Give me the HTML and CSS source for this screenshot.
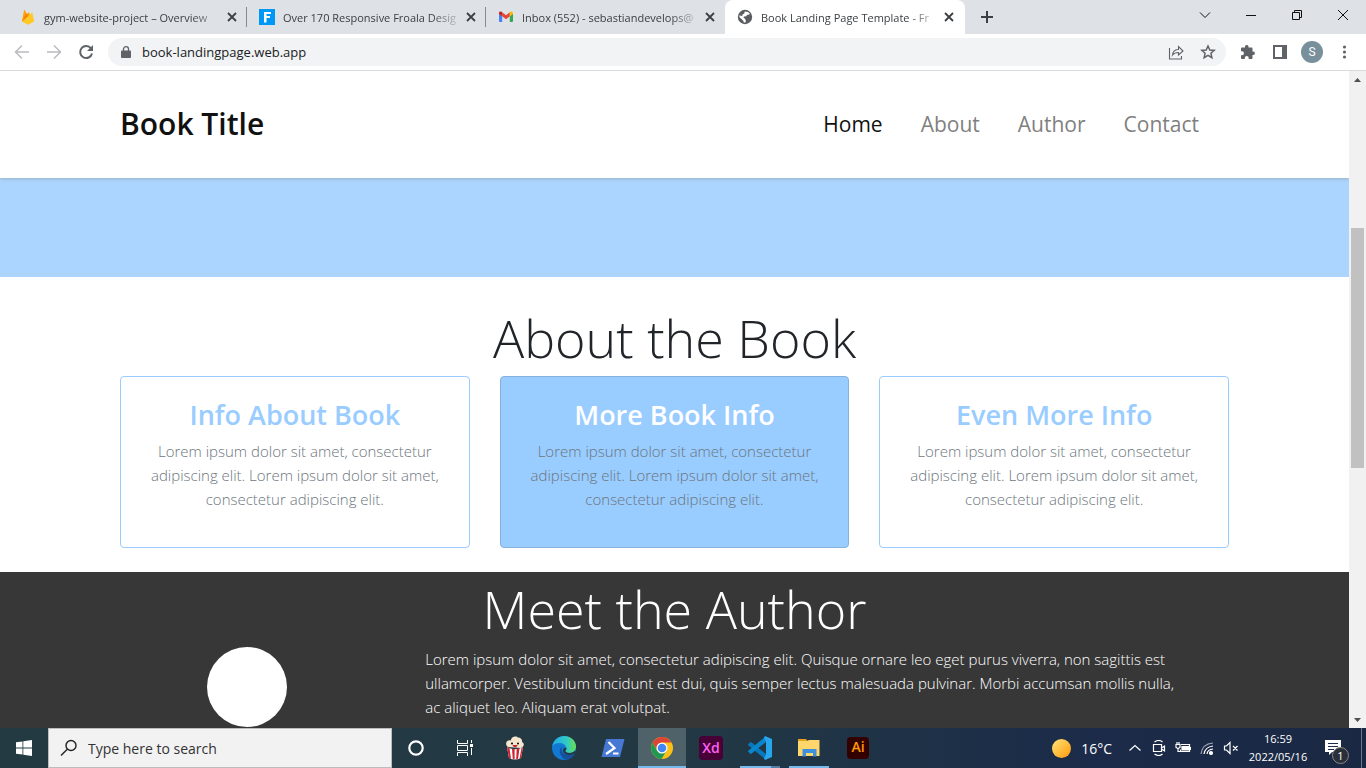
FILE: index.html
```html
<!DOCTYPE html>
<html lang="en">
<head>
<meta charset="utf-8">
<title>Book Landing Page Template</title>
<link rel="stylesheet" href="styles.css">
</head>
<body>
<div class="tabstrip">
  <div class="tab">
    <svg class="favicon" viewBox="0 0 16 16"><path fill="#ffa000" d="M2 12.500 4 1.500c.1-.5.700-.5.900-.1L7 5.200l.900-1.600c.2-.4.6-.4.8 0L14 12.500z"/><path fill="#f57c00" d="M8.800 8.300 6.600 4.400 2 12.500z"/><path fill="#ffca28" d="m14 12.500-1.500-8.400c-.1-.4-.5-.5-.8-.2L2 12.500l5.300 3a1.500 1.500 0 0 0 1.500 0z"/></svg>
    <button class="tab-title">gym-website-project – Overview</button>
    <button class="tab-close" aria-label="Close tab"><svg viewBox="0 0 10 10"><path d="m1 1 8 8M9 1 1 9"/></svg></button>
  </div>
  <div class="tab">
    <svg class="favicon" viewBox="0 0 16 16"><path fill="#0098f7" d="M0 0h16v16H0z"/><path fill="#fff" d="M5 3h7v2H7.500v2H11v2H7.500v4.500H5z"/></svg>
    <button class="tab-title">Over 170 Responsive Froala Desig</button>
    <button class="tab-close" aria-label="Close tab"><svg viewBox="0 0 10 10"><path d="m1 1 8 8M9 1 1 9"/></svg></button>
  </div>
  <div class="tab">
    <svg class="favicon" viewBox="0 0 16 16"><path fill="#4285f4" d="M1 4.500 4.200 7v6H2a1 1 0 0 1-1-1z"/><path fill="#34a853" d="M11.800 7 15 4.500V12a1 1 0 0 1-1 1h-2.200z"/><path fill="#ea4335" d="M4.200 3.300 8 6.200l3.800-2.900v4L8 10.200 4.200 7.300z"/><path fill="#c5221f" d="M1 4.200c0-1.700 1.600-2.300 2.700-1.300l.5.400v4L1 5z"/><path fill="#fbbc04" d="M15 4.200c0-1.700-1.600-2.300-2.700-1.300l-.5.400v4L15 5z"/></svg>
    <button class="tab-title">Inbox (552) - sebastiandevelops@</button>
    <button class="tab-close" aria-label="Close tab"><svg viewBox="0 0 10 10"><path d="m1 1 8 8M9 1 1 9"/></svg></button>
  </div>
  <div class="tab active">
    <svg class="favicon" viewBox="0 0 16 16"><circle cx="8" cy="8" r="7.200" fill="#5a5e63"/><path fill="#fff" d="M7.800 2.500 11 3l1.700 1.500-.6 1.200-2 .1-.8 1.500-2.200.2-.7 1L8 9.700l.9 2-.5 1.900-1.500-.1-.8-2-1.900-1.700L2.300 8l.3-1.700 2.600 1 .4-2 1.500-.6z"/></svg>
    <button class="tab-title">Book Landing Page Template - Fr</button>
    <button class="tab-close" aria-label="Close tab"><svg viewBox="0 0 10 10"><path d="m1 1 8 8M9 1 1 9"/></svg></button>
  </div>
  <button class="new-tab" aria-label="New tab"><svg viewBox="0 0 12 12"><path d="M6 0v12M0 6h12"/></svg></button>
  <div class="window-controls">
    <button aria-label="Search tabs"><svg viewBox="0 0 12 12"><path d="m1 3.500 5 5 5-5"/></svg></button>
    <button aria-label="Minimize"><svg viewBox="0 0 12 12"><path d="M1 6.500h10"/></svg></button>
    <button aria-label="Restore"><svg viewBox="0 0 12 12"><path d="M1.500 3.500h7v7h-7zM3.500 3.500v-2h7v7h-2"/></svg></button>
    <button aria-label="Close"><svg viewBox="0 0 12 12"><path d="m1 1 10 10M11 1 1 11"/></svg></button>
  </div>
</div>

<div class="toolbar">
  <button class="tool dim" aria-label="Back"><svg viewBox="0 0 16 16"><path d="M15 8H2M8 1.500 1.500 8 8 14.500"/></svg></button>
  <button class="tool dim" aria-label="Forward"><svg viewBox="0 0 16 16"><path d="M1 8h13M8 1.500 14.500 8 8 14.500"/></svg></button>
  <button class="tool reload" aria-label="Reload"><svg viewBox="0 0 16 16"><path d="M13 4.500A6 6 0 1 0 14 9.500"/><path class="solid" d="M15 1v6H9z"/></svg></button>
  <div class="omnibox">
    <svg class="lock" viewBox="0 0 10 12"><path fill="#5f6368" d="M1 4.500h8c.5 0 1 .5 1 1V11c0 .5-.5 1-1 1H1c-.5 0-1-.5-1-1V5.500c0-.5.5-1 1-1z"/><path fill="none" stroke="#5f6368" stroke-width="1.300" d="M2.500 5V3a2.500 2.300 0 0 1 5 0v2"/></svg>
    <input class="url" type="text" aria-label="Address" value="book-landingpage.web.app">
    <button class="tool share" aria-label="Share"><svg viewBox="0 0 16 16"><path d="M1.500 4v11h12v-3M4.500 11c.5-4 3-5.500 6-5.500v-3L15 7l-4.500 4V8.500c-2.500 0-4.500.5-6 2.500z"/></svg></button>
    <button class="tool star" aria-label="Bookmark"><svg viewBox="0 0 16 16"><path d="m8 2 1.800 4 4.400.4-3.300 2.900 1 4.300L8 11.300l-3.900 2.300 1-4.300-3.300-2.900L6.200 6z"/></svg></button>
  </div>
  <button class="tool ext" aria-label="Extensions"><svg viewBox="0 0 16 16"><path class="solid" d="M13.500 7.500h-1V4.700c0-.7-.5-1.200-1.200-1.200H8.500v-1a1.800 1.800 0 0 0-3.500 0v1H2.200C1.500 3.500 1 4 1 4.700v2.600h1a1.900 1.900 0 0 1 0 3.900H1v2.700c0 .6.500 1.100 1.200 1.100h2.600v-1a1.900 1.900 0 0 1 3.900 0v1h2.600c.7 0 1.200-.5 1.200-1.100V11h1a1.800 1.800 0 0 0 0-3.500z"/></svg></button>
  <button class="tool side" aria-label="Side panel"><svg viewBox="0 0 16 16"><path class="solid" fill-rule="evenodd" d="M1 1h14v14H1zm2 2v10h7V3z"/></svg></button>
  <button class="avatar" aria-label="Profile">S</button>
  <button class="tool dots" aria-label="Menu"><svg viewBox="0 0 16 16"><circle class="solid" cx="8.500" cy="3" r="1.600"/><circle class="solid" cx="8.500" cy="8" r="1.600"/><circle class="solid" cx="8.500" cy="13" r="1.600"/></svg></button>
</div>

<div class="viewport">
  <div class="page">
    <header class="site-header">
      <a class="brand" href="#">Book Title</a>
      <nav class="site-nav">
        <a class="current" href="#">Home</a>
        <a href="#about">About</a>
        <a href="#author">Author</a>
        <a href="#contact">Contact</a>
      </nav>
    </header>
    <div class="hero"></div>
    <section class="about" id="about">
      <h1 class="display">About the Book</h1>
      <div class="cards">
        <article class="card">
          <h2>Info About Book</h2>
          <p>Lorem ipsum dolor sit amet, consectetur<br>adipiscing elit. Lorem ipsum dolor sit amet,<br>consectetur adipiscing elit.</p>
        </article>
        <article class="card filled">
          <h2>More Book Info</h2>
          <p>Lorem ipsum dolor sit amet, consectetur<br>adipiscing elit. Lorem ipsum dolor sit amet,<br>consectetur adipiscing elit.</p>
        </article>
        <article class="card">
          <h2>Even More Info</h2>
          <p>Lorem ipsum dolor sit amet, consectetur<br>adipiscing elit. Lorem ipsum dolor sit amet,<br>consectetur adipiscing elit.</p>
        </article>
      </div>
    </section>
    <section class="author" id="author">
      <h1 class="display">Meet the Author</h1>
      <div class="author-row">
        <div class="portrait-col"><div class="portrait"></div></div>
        <p class="bio">Lorem ipsum dolor sit amet, consectetur adipiscing elit. Quisque ornare leo eget purus viverra, non sagittis est<br>ullamcorper. Vestibulum tincidunt est dui, quis semper lectus malesuada pulvinar. Morbi accumsan mollis nulla,<br>ac aliquet leo. Aliquam erat volutpat.</p>
      </div>
    </section>
  </div>
  <div class="scrollbar">
    <svg class="arrow" viewBox="0 0 17 17"><path d="M5 11h7L8.500 7z"/></svg>
    <div class="track"><div class="thumb"></div></div>
    <svg class="arrow" viewBox="0 0 17 17"><path d="M5 7h7l-3.500 4z"/></svg>
  </div>
</div>

<div class="taskbar">
  <button class="start" aria-label="Start"><svg viewBox="0 0 16 16"><path fill="#fff" d="M0 2.300 6.500 1.400v6.200H0zM7.300 1.200 16 0v7.600H7.300zM0 8.400h6.500v6.200L0 13.700zM7.300 8.400H16V16l-8.700-1.200z"/></svg></button>
  <label class="search">
    <svg viewBox="0 0 18 18"><circle cx="11" cy="6.500" r="5"/><path d="M7.300 10.200 1 16.500"/></svg>
    <input type="text" aria-label="Type here to search" placeholder="Type here to search">
  </label>
  <div class="apps">
    <button class="app" aria-label="Cortana"><svg viewBox="0 0 24 24"><circle cx="12" cy="12" r="6.700" fill="none" stroke="#fff" stroke-width="2.200"/></svg></button>
    <button class="app task-view" aria-label="Task View"><svg viewBox="0 0 24 24"><path fill="none" stroke="#fff" d="M3.500 4v3.500h10V4M3.500 20v-3.500h10V20M3.500 9.500h10v5h-10zM17.500 4v3M17.500 12v7"/><path fill="#fff" d="M16 8h3v3h-3z"/></svg></button>
    <button class="app" aria-label="Popcorn Time"><svg viewBox="0 0 24 24"><path fill="#f5e6cf" d="M5 11C1 8 4 3 8 4.500 8 0 14-.5 15 1.500c3 0 4.500 2.500 4 4.500 3 1.500 2 5-1 6z"/><path fill="#fff" d="m4 11 2 11c4 2 8 2 12 0l2-11c-5 3-11 3-16 0z"/><path fill="#cf2330" d="m4 11 2 11 2 1-1.500-11zM9 13l.8 10.300h1.800V13zM13.700 13l-.5 10.300H15L16.500 12zM18.500 12l-2 10.700L18 22l2-11z"/><circle cx="9" cy="7.500" r="1"/><circle cx="15" cy="7.500" r="1"/><path fill="#c5222b" d="M9.500 9h5c-.5 3-4 3-5 0z"/></svg></button>
    <button class="app" aria-label="Edge"><svg viewBox="0 0 24 24"><defs><linearGradient id="e1" x1="0" x2="1"><stop stop-color="#22a9e8"/><stop offset=".6" stop-color="#31c9c5"/><stop offset="1" stop-color="#66e252"/></linearGradient></defs><circle cx="12" cy="12" r="12" fill="#1179d1"/><path fill="url(#e1)" d="M.2 10C2 3.500 7 0 12 0c8 0 12 6 12 10.500 0 4-3 6.500-6.500 6.500-3 0-4.500-1-4.200-2.200 1.200-1 1.200-2 1-3C13.500 8.500 10.500 7 7.500 7 4 7 1.500 8.500.2 10z"/><path fill="#17509f" d="M9.500 10.500C6 14 8 21.500 14 23.800c3.500-.5 6.800-2.800 8.500-6-4.500 2.500-11 1-12.500-2.300-.8-1.700-.6-3.500-.5-5z"/><path fill="#223944" d="M14.300 11.800c.3 1.300-.2 2.200-1 3-.3 1.200 1.200 2.200 4.200 2.200 2 0 3.800-.8 5.400-2.200l.6 1.500-1.300 1.800c-5 2.200-10.400.7-11.200-3.100-.3-1.600.8-3.300 3.300-3.200z"/></svg></button>
    <button class="app" aria-label="PowerShell"><svg viewBox="0 0 24 24"><path fill="#4678d4" d="M5 3h18.500L19 21H.5z"/><path fill="none" stroke="#fff" stroke-width="2.200" d="m7.500 6 6 6-8.500 6M12 17.500h5.500"/></svg></button>
    <button class="app current running" aria-label="Chrome"><svg viewBox="0 0 24 24"><circle cx="12" cy="12" r="11" fill="#fbc116"/><path fill="#db4437" d="M2.500 6.500a11 11 0 0 1 19 0H12a5.500 5.500 0 0 0-5 7.500z"/><path fill="#229953" d="M2.500 6.500A11 11 0 0 0 11.500 23l5-8.300a5.500 5.500 0 0 1-9.300 0z"/><circle cx="12" cy="12" r="5.500" fill="#fff"/><circle cx="12" cy="12" r="4.300" fill="#4285f4"/></svg></button>
    <button class="app" aria-label="Adobe XD"><span class="adobe xd">Xd</span></button>
    <button class="app running many" aria-label="Visual Studio Code"><svg viewBox="0 0 24 24"><path fill="#0878bd" d="M1.500 7 3 6l15 12-1 5L.5 9.500a1 1 0 0 1 0-1.500z"/><path fill="#0a86cc" d="M1.500 17 3 18 18 6l-1-5L.5 14.500a1 1 0 0 0 0 1.500z"/><path fill="#29a5ee" d="m17 0 7 3v18l-7 3-1-1.500L18 18V6l-2-4.500z"/></svg></button>
    <button class="app running" aria-label="File Explorer"><svg viewBox="0 0 24 24"><path fill="#e7a11a" d="M1 3h8l2 2.500H1z"/><path fill="#ffd66b" d="M1 5h9l2-1h10.500v16H1z"/><path fill="#3d91dc" d="M5.500 13h14v7.500H16V17H9v3.500H5.500z"/></svg></button>
    <button class="app" aria-label="Adobe Illustrator"><span class="adobe ai">Ai</span></button>
  </div>
  <div class="tray">
    <button class="weather"><span class="sun"></span>16°C</button>
    <button class="tray-icon" aria-label="Hidden icons"><svg viewBox="0 0 16 16"><path d="m2.500 10.500 5.500-5 5.500 5"/></svg></button>
    <button class="tray-icon" aria-label="Meet Now"><svg viewBox="0 0 16 16"><path d="M2.500 4.500h8v7h-8zM10.500 8l3-2v5l-3-2M3.500 2q4.500-3 8 0M3.500 14q4.500 3 8 0"/></svg></button>
    <button class="tray-icon" aria-label="Battery"><svg viewBox="0 0 16 16"><path d="M6 4.500h8.500v7h-9v-2M15.500 7v3M1 4.500h4v3l-2 1-2-1zM2 4V2M4 4V2M3 8v3.500h2"/><path fill="#fff" d="M7 6.500h6.500V10H7z"/></svg></button>
    <button class="tray-icon wifi" aria-label="Wi-Fi"><svg viewBox="0 0 16 16"><path opacity=".6" d="M2 14Q3 4 14 3"/><path d="M5 14q1-7 9-8M8 14q.5-4.500 6-5"/><circle cx="12" cy="13" r="1.500" fill="#fff"/></svg></button>
    <button class="tray-icon" aria-label="Volume muted"><svg viewBox="0 0 16 16"><path d="M1.500 6h2L7 2.500v11L3.500 10h-2zM10 6l4.500 4.500M14.500 6 10 10.500"/></svg></button>
    <button class="clock"><span>16:59</span><span>2022/05/16</span></button>
    <button class="notify" aria-label="Notifications"><svg viewBox="0 0 18 18"><path fill="#fff" d="M1 1h16v12H8l-3 3v-3H1z"/><path stroke="#1c2d4a" d="M4 4.500h10M4 7.500h10M4 10.500h6"/></svg><span class="badge">1</span></button>
    <div class="show-desktop"></div>
  </div>
</div>
</body>
</html>
```
FILE: styles.css
```css
* { box-sizing: border-box; }

body {
  margin: 0;
  height: 100vh;
  display: flex;
  flex-direction: column;
  overflow: hidden;
  background: #fff;
  color: #212529;
  font-family: "Open Sans", "Noto Sans", sans-serif;
  font-size: 15px;
}

button, input {
  margin: 0;
  padding: 0;
  border: 0;
  background: none;
  color: inherit;
  font: inherit;
}

h1, h2, p { margin: 0; }
a { color: inherit; text-decoration: none; }
svg { display: block; flex: none; }

/* Tab strip */
.tabstrip {
  flex: none;
  display: flex;
  align-items: stretch;
  height: 34px;
  padding-left: 8px;
  background: #dee1e6;
}
.tab {
  display: flex;
  align-items: center;
  flex: 0 1 239px;
  min-width: 0;
  padding: 0 9px 0 12px;
  color: #3c4043;
  font-size: 11px;
  background: linear-gradient(#86898e, #86898e) right center / 1px 20px no-repeat;
}
.tab:nth-child(1), .tab:nth-child(2) { background-position: right 0 center; }
.tab:nth-child(3) { background: none; }
.tab.active {
  flex-basis: 240px;
  padding-right: 10px;
  border-radius: 8px 8px 0 0;
  background: #fff;
}
.favicon { width: 16px; height: 16px; margin-right: 8px; }
.tab-title {
  flex: 1;
  min-width: 0;
  white-space: nowrap;
  text-align: left;
  mask-image: linear-gradient(to right, #000 85%, rgba(0, 0, 0, .2));
}
.tab-close {
  display: flex;
  justify-content: center;
  width: 12px;
  margin-left: 8px;
}
.tab-close svg { width: 10px; height: 10px; }
.tab-close path { stroke: #3c4043; stroke-width: 1.8; }
.new-tab { padding: 0 16px; }
.new-tab svg { width: 12px; height: 12px; }
.new-tab path { stroke: #3c4043; stroke-width: 2; }
.window-controls { display: flex; margin-left: auto; }
.window-controls button {
  display: flex;
  justify-content: center;
  align-items: center;
  width: 46px;
  height: 29px;
}
.window-controls svg { width: 12px; height: 12px; }
.window-controls path { fill: none; stroke: #111; }

/* Toolbar */
.toolbar {
  flex: none;
  display: flex;
  align-items: center;
  height: 37px;
  padding: 0 6px;
  border-bottom: 1px solid #d9dadc;
  color: #5f6368;
}
.tool {
  display: flex;
  justify-content: center;
  flex: none;
  width: 32px;
}
.tool svg { width: 16px; height: 16px; }
.tool path { fill: none; stroke: #5f6368; stroke-width: 1.5; }
.tool.dim path { stroke: #b9bbbe; }
.tool.reload path { stroke-width: 2; }
.tool.share path { stroke-width: 1.1; }
.tool .solid { fill: #5f6368; stroke: none; }
.omnibox {
  flex: 1;
  display: flex;
  align-items: center;
  height: 28px;
  margin: 0 6px;
  padding: 0 2px 0 13px;
  border-radius: 14px;
  background: #f1f3f4;
}
.lock { width: 10px; height: 12px; }
.url {
  flex: 1;
  min-width: 0;
  margin-left: 11px;
  color: #202124;
  font-size: 13px;
  outline: 0;
}
.avatar {
  width: 22px;
  height: 22px;
  margin: 0 5px;
  border-radius: 50%;
  background: #78909c;
  color: #fff;
  font: 12px Roboto, sans-serif;
}

/* Browser viewport */
.viewport { flex: 1; min-height: 0; display: flex; }
.page {
  flex: 1;
  min-width: 0;
  display: flex;
  flex-direction: column;
  overflow: hidden;
}
.site-header {
  flex: none;
  display: flex;
  align-items: center;
  justify-content: space-between;
  padding: 31px 150px 33px 120px;
  box-shadow: 0 1px 3px rgba(140, 140, 140, .5);
  position: relative;
}
.brand { color: #111; font-size: 30px; line-height: 43px; font-weight: 600; }
.site-nav { display: flex; gap: 38px; font-size: 21px; color: #7f7f7f; }
.site-nav .current { color: #111; }
.hero { flex: none; height: 99px; background: #abd5ff; }

.display {
  font-size: 52px;
  line-height: 67px;
  font-weight: 300;
  text-align: center;
}
.about { flex: none; padding: 27px 120px 24px; }
.cards {
  display: grid;
  grid-template-columns: repeat(3, 1fr);
  gap: 30px;
  margin-top: 5px;
}
.card {
  padding: 20px 16px 36px;
  border: 1px solid #99ccff;
  border-radius: 4px;
  text-align: center;
}
.card h2 {
  margin-bottom: 7px;
  color: #99ccff;
  font-size: 27px;
  line-height: 35px;
  font-weight: 600;
}
.card p {
  color: #6c757d;
  line-height: 24px;
  font-weight: 350;
  white-space: nowrap;
}
.card.filled { background: #99ccff; border-color: #86b2df; }
.card.filled h2 { color: #fff; }

.author {
  flex: 1 0 auto;
  padding: 3px 104px 0;
  background: #373737;
  color: #fff;
}
.author-row {
  display: grid;
  grid-template-columns: 1fr 3fr;
  margin-top: 5px;
}
.portrait-col { display: flex; justify-content: center; }
.portrait { width: 80px; height: 80px; border-radius: 50%; background: #fff; }
.bio {
  padding-left: 36px;
  line-height: 24px;
  font-weight: 350;
  white-space: nowrap;
}

.scrollbar {
  flex: none;
  display: flex;
  flex-direction: column;
  width: 17px;
  background: #f1f1f1;
}
.arrow { width: 17px; height: 17px; fill: #505050; }
.track {
  flex: 1;
  display: grid;
  grid-template-rows: 140fr 240fr 243fr;
  padding: 0 2px;
}
.thumb { grid-row: 2; background: #c1c1c1; }

/* Taskbar */
.taskbar {
  flex: none;
  display: flex;
  height: 40px;
  background: linear-gradient(to right, #233a42, #223944 50%, #1b2b49 80%, #1a2843);
  color: #fff;
}
.start {
  display: flex;
  justify-content: center;
  align-items: center;
  width: 48px;
}
.start svg { width: 16px; height: 16px; }
.search {
  display: flex;
  align-items: center;
  flex: 0 1 344px;
  gap: 10px;
  padding: 0 11px;
  border: 1px solid #bcbcbc;
  background: #f2f2f2;
}
.search svg { width: 18px; height: 18px; fill: none; stroke: #222; stroke-width: 1.4; }
.search input { flex: 1; min-width: 0; font-size: 14px; outline: 0; }
.search input::placeholder { color: #333; opacity: 1; }
.apps { display: flex; gap: 1px; }
.app {
  display: flex;
  justify-content: center;
  align-items: center;
  width: 48px;
}
.app.task-view { width: 49px; }
.app svg { width: 24px; height: 24px; }
.app.current { background: #4f626a; }
.app.running {
  background-image: linear-gradient(#76b9ed, #76b9ed);
  background-position: center bottom;
  background-size: 40px 2px;
  background-repeat: no-repeat;
}
.app.current.running { background-size: 100% 2px; }
.app.many { background-image: linear-gradient(to right, #76b9ed 31px, #527fa3 31px); }
.adobe {
  width: 24px;
  height: 24px;
  border-radius: 4px;
  font-size: 14px;
  line-height: 23px;
  font-weight: 600;
}
.adobe.xd { background: #470137; color: #ff61f6; }
.adobe.ai { width: 22px; height: 22px; line-height: 20px; background: #330000; color: #ff9a00; }

.tray { display: flex; align-items: center; margin-left: auto; }
.weather { display: flex; align-items: center; gap: 10px; margin-right: 11px; font-size: 14px; }
.sun {
  width: 19px;
  height: 19px;
  border-radius: 50%;
  background: linear-gradient(135deg, #ffe57a, #ff9a0a);
}
.tray-icon { display: flex; justify-content: center; width: 24px; }
.tray-icon svg { width: 16px; height: 16px; fill: none; stroke: #fff; stroke-width: 1.2; }
.clock {
  display: flex;
  flex-direction: column;
  align-items: center;
  width: 70px;
  font-size: 11px;
  line-height: 18px;
}
.notify {
  position: relative;
  display: flex;
  justify-content: center;
  width: 40px;
  margin-right: 8px;
}
.notify svg { width: 18px; height: 18px; }
.badge {
  position: absolute;
  top: 8px;
  right: 4px;
  width: 17px;
  height: 17px;
  border: 1px solid #888;
  border-radius: 50%;
  background: #2b3038;
  font-size: 11px;
  line-height: 15px;
}
.show-desktop { align-self: stretch; width: 5px; border-left: 1px solid #6b7688; }
```
